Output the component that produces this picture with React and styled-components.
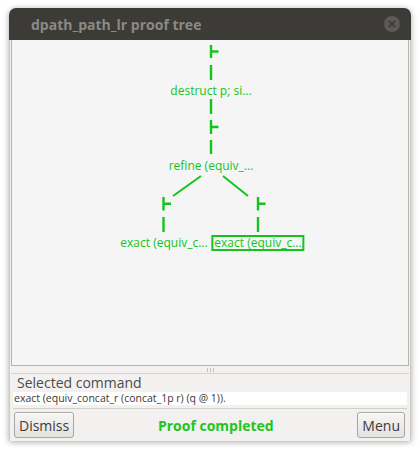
import styled, { createGlobalStyle } from 'styled-components';

const GREEN = '#14c41c';

const GlobalStyle = createGlobalStyle`
  html, body {
    margin: 0;
    padding: 0;
    background: #ffffff;
  }
  body {
    font-family: 'Open Sans', 'DejaVu Sans', sans-serif;
  }
`;

const Page = styled.div`
  padding: 8px 9px;
  width: 420px;
  height: 450px;
  box-sizing: border-box;
`;

const Window = styled.div`
  width: 402px;
  height: 433px;
  display: flex;
  flex-direction: column;
  border-radius: 7px 7px 0 0;
  background: #f2f1f0;
  box-shadow: 0 1px 6px rgba(0, 0, 0, 0.35);
  overflow: hidden;
`;

const TitleBar = styled.div`
  height: 32px;
  flex: none;
  background: #3c3b37;
  display: flex;
  align-items: center;
  justify-content: space-between;
  padding: 0 11px 0 22px;
`;

const Title = styled.span`
  color: #8b8a85;
  font-family: 'Open Sans', sans-serif;
  font-weight: 700;
  font-size: 14px;
`;

const CloseButton = styled.span`
  width: 16px;
  height: 16px;
  border-radius: 50%;
  background: #5b5a56;
  display: flex;
  align-items: center;
  justify-content: center;
`;

const Body = styled.div`
  flex: 1;
  display: flex;
  flex-direction: column;
  padding: 0 1px;
  border-left: 1px solid #cfccc7;
  border-right: 1px solid #cfccc7;
`;

const Canvas = styled.div`
  position: relative;
  height: 325px;
  flex: none;
  background: #f5f5f5;
  border: 1px solid #b7b4ae;
  border-top: none;
`;

const TreeLines = styled.svg`
  position: absolute;
  inset: 0;
  width: 100%;
  height: 100%;
`;

const NodeLabel = styled.span`
  position: absolute;
  transform: translate(-50%, -50%);
  white-space: nowrap;
  font-family: 'Open Sans', sans-serif;
  font-size: 12px;
  color: ${GREEN};
  line-height: 12px;
  padding: 0 1px;
  border: 2px solid ${(p) => (p.$selected ? GREEN : 'transparent')};
`;

const Grip = styled.div`
  height: 7px;
  flex: none;
  display: flex;
  justify-content: center;
  align-items: center;
  gap: 2px;
  border-bottom: 1px solid #d6d3ce;
  span {
    width: 1px;
    height: 4px;
    background: #c2bfba;
  }
`;

const Panel = styled.div`
  display: flex;
  flex-direction: column;
  padding: 0 2px;
`;

const PanelLabel = styled.div`
  font-family: 'Open Sans', sans-serif;
  font-size: 14px;
  color: #4c4c4c;
  padding-left: 4px;
  height: 18px;
  line-height: 18px;
`;

const CommandField = styled.div`
  background: #ffffff;
  height: 13px;
  line-height: 13px;
  font-family: 'Open Sans', sans-serif;
  font-size: 10.5px;
  color: #3a3a3a;
  padding-left: 1px;
`;

const ActionBar = styled.div`
  margin-top: 3px;
  border-top: 1px solid #d3d0cb;
  padding: 3px 2px 0 1px;
  display: flex;
  align-items: center;
  justify-content: space-between;
`;

const Button = styled.button`
  height: 26px;
  padding: 0 4px;
  border: 1px solid #a8a6a2;
  border-radius: 3px;
  background: linear-gradient(#f7f6f5, #e4e2df);
  box-shadow: inset 0 1px 0 #ffffff;
  font-family: 'Open Sans', sans-serif;
  font-size: 14px;
  color: #3c3c3c;
`;

const Status = styled.span`
  font-family: 'Open Sans', sans-serif;
  font-weight: 700;
  font-size: 14px;
  color: #22c41e;
`;

// page coords -> canvas coords
const ox = 11;
const oy = 41;

function Turnstile({ x, y1, y2 }) {
  const mid = (y1 + y2) / 2;
  return (
    <g>
      <line x1={x - ox} y1={y1 - oy} x2={x - ox} y2={y2 - oy} />
      <line x1={x - ox} y1={mid - oy} x2={x - ox + 7.5} y2={mid - oy} />
    </g>
  );
}

function Seg({ x, y1, y2 }) {
  return <line x1={x - ox} y1={y1 - oy} x2={x - ox} y2={y2 - oy} />;
}

const nodes = [
  { x: 210, y: 91.5, text: 'destruct p; si...' },
  { x: 210, y: 167, text: 'refine (equiv_...' },
  { x: 163, y: 243.5, text: 'exact (equiv_c...' },
  { x: 257, y: 243.5, text: 'exact (equiv_c...', selected: true },
];

export default function App() {
  return (
    <Page>
      <GlobalStyle />
      <Window>
        <TitleBar>
          <Title>dpath_path_lr proof tree</Title>
          <CloseButton>
            <svg width="8" height="8" viewBox="0 0 8 8">
              <path d="M1 1 L7 7 M7 1 L1 7" stroke="#34332f" strokeWidth="1.4" />
            </svg>
          </CloseButton>
        </TitleBar>
        <Body>
          <Canvas>
            <TreeLines stroke={GREEN} strokeWidth="2.4" fill="none">
              <Turnstile x={210} y1={46} y2={59} />
              <Seg x={210} y1={66} y2={81} />
              <Seg x={210} y1={100} y2={115} />
              <Turnstile x={210} y1={121} y2={135} />
              <Seg x={210} y1={141} y2={155} />
              <line x1={200 - ox} y1={177 - oy} x2={172 - ox} y2={197 - oy} strokeWidth="2" />
              <line x1={222 - ox} y1={177 - oy} x2={247 - ox} y2={197 - oy} strokeWidth="2" />
              <Turnstile x={162.5} y1={198} y2={211.5} />
              <Turnstile x={257} y1={198} y2={211.5} />
              <Seg x={162.5} y1={218} y2={233} />
              <Seg x={257} y1={218} y2={233} />
            </TreeLines>
            {nodes.map((n, i) => (
              <NodeLabel
                key={i}
                $selected={n.selected}
                style={{ left: n.x - ox, top: n.y - oy }}
              >
                {n.text}
              </NodeLabel>
            ))}
          </Canvas>
          <Grip>
            <span />
            <span />
            <span />
          </Grip>
          <Panel>
            <PanelLabel>Selected command</PanelLabel>
            <CommandField>exact (equiv_concat_r (concat_1p r) (q @ 1)).</CommandField>
            <ActionBar>
              <Button>Dismiss</Button>
              <Status>Proof completed</Status>
              <Button>Menu</Button>
            </ActionBar>
          </Panel>
        </Body>
      </Window>
    </Page>
  );
}
